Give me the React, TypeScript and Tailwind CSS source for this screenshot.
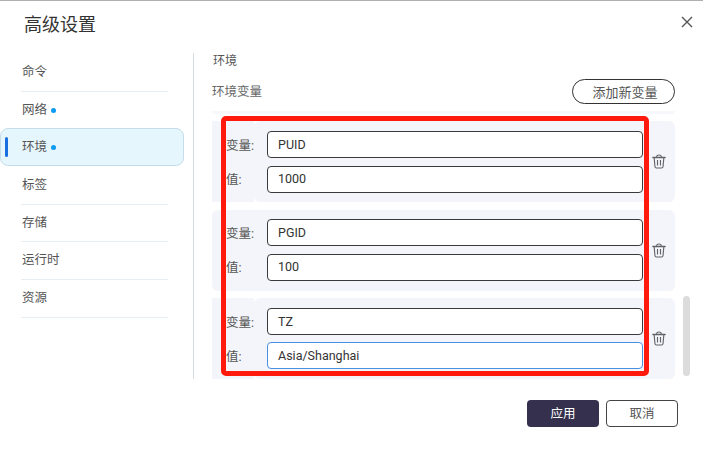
import React from 'react';

const navItems = [
  { label: '命令' },
  { label: '网络', dot: true },
  { label: '环境', dot: true, active: true },
  { label: '标签' },
  { label: '存储' },
  { label: '运行时' },
  { label: '资源' },
];

const envVars = [
  { name: 'PUID', value: '1000', padTop: 'pt-[10px]' },
  { name: 'PGID', value: '100', padTop: 'pt-[9.5px]', roundLeft: true },
  { name: 'TZ', value: 'Asia/Shanghai', padTop: 'pt-[9.9px]', focused: true },
];

function TrashIcon() {
  return (
    <svg width="14" height="15" viewBox="0 0 15 16" fill="none" stroke="#5f6368" strokeWidth="1.2">
      <path d="M1 3.6h13" strokeWidth="1.6" strokeLinecap="round" />
      <path d="M5 3.2c0-1.6 1-2.2 2.5-2.2s2.5.6 2.5 2.2" />
      <path d="M2.3 4l.9 9.6c.1.8.6 1.4 1.5 1.4h5.6c.9 0 1.4-.6 1.5-1.4l.9-9.6" />
      <path d="M5.9 6.5v5.8M9.1 6.5v5.8" />
    </svg>
  );
}

function EnvCard({ name, value, focused, padTop, roundLeft }: { name: string; value: string; focused?: boolean; padTop: string; roundLeft?: boolean }) {
  return (
    <div className="flex h-[81px] shrink-0">
      <div className={`flex w-[42px] flex-col gap-[7.5px] bg-[#f4f5fa] pl-[14px] text-[12.5px] text-[#555] ${padTop} ${roundLeft ? 'rounded-l-md' : ''}`}>
        <span className="flex h-[27px] items-center whitespace-nowrap pt-[3px]">变量:</span>
        <span className="flex h-[27px] items-center whitespace-nowrap pt-[3px]">值:</span>
      </div>
      <div className={`flex flex-1 bg-[#f4f5fa] pl-[13px] ${roundLeft ? 'rounded-r-md' : 'rounded-md'}`}>
        <div className={`flex w-[376px] flex-col gap-[7.5px] ${padTop}`}>
          <div className="flex h-[27px] items-center rounded-[4px] border border-[#3a3a3a] bg-white pl-[10px] pt-[1px] text-[12.5px] text-[#333]">
            {name}
          </div>
          <div className={`flex h-[27px] items-center rounded-[4px] border bg-white pl-[10px] pt-[1px] text-[12.5px] text-[#333] ${focused ? 'border-[#4a90e2]' : 'border-[#3a3a3a]'}`}>
            {value}
          </div>
        </div>
        <div className="flex flex-1 items-center justify-center">
          <TrashIcon />
        </div>
      </div>
    </div>
  );
}

export default function App() {
  return (
    <div
      className="flex h-[449px] w-[703px] flex-col overflow-hidden border-t border-[#b0b0b0] bg-white"
      style={{ fontFamily: 'Roboto, "Noto Sans CJK SC", sans-serif' }}
    >
      <div className="flex h-[52px] shrink-0 items-start justify-between pl-[24px] pr-[10px] pt-[10px]">
        <h1 className="text-[18px] leading-[27px] text-[#333]">高级设置</h1>
        <button className="mt-[5px] text-[#555]">
          <svg width="12" height="12" viewBox="0 0 12 12" stroke="currentColor" strokeWidth="1.4">
            <path d="M1 1l10 10M11 1L1 11" />
          </svg>
        </button>
      </div>

      <div className="flex h-[326px] shrink-0">
        <nav className="w-[194px] shrink-0 border-r border-[#d5dde3] pr-[9px] pt-[1px]">
          {navItems.map((item) =>
            item.active ? (
              <div
                key={item.label}
                className="relative -mt-[1px] mb-[1px] flex h-[37.67px] items-center rounded-lg border border-[#c6dce8] bg-[#e5f6fd] pl-[21px] text-[12.5px] text-[#555]"
              >
                <span className="absolute left-[4px] top-[8px] h-[20px] w-[3px] rounded-sm bg-[#1a6fe0]" />
                {item.label}
                <span className="ml-[4px] mt-[1px] h-[5px] w-[5px] rounded-full bg-[#0a9bf0]" />
              </div>
            ) : (
              <div key={item.label} className="pl-[21px] pr-[16px]">
                <div className={`flex h-[37.67px] items-center pl-[1px] text-[12.5px] text-[#555] ${item.label === '网络' ? '' : 'border-b border-[#e6eef4]'}`}>
                  {item.label}
                  {item.dot && <span className="ml-[4px] mt-[1px] h-[5px] w-[5px] rounded-full bg-[#0a9bf0]" />}
                </div>
              </div>
            ),
          )}
        </nav>

        <div className="relative flex-1 pl-[18px]">
          <div className="pl-[1px] pt-[1px] text-[12px] leading-[15px] text-[#555]">环境</div>
          <div className="mt-[10px] flex h-[25px] w-[463px] items-center justify-between">
            <span className="pt-[1px] text-[12.5px] text-[#666]">环境变量</span>
            <button className="flex h-[25px] w-[103px] items-center justify-center rounded-full border border-[#333] pl-[3px] pt-[2px] text-[13px] text-[#555]">
              添加新变量
            </button>
          </div>
          <div className="mt-[7px] h-[3px] w-[463px] rounded-b-md bg-[#f7f8fb]" />
          <div className="mt-[7px] flex w-[463px] flex-col gap-[7.5px]">
            {envVars.map((v) => (
              <EnvCard key={v.name} {...v} />
            ))}
          </div>

          {/* scrollbar thumb */}
          <div className="absolute left-[489px] top-[243px] h-[80px] w-[7px] rounded-full bg-[#dcdcdc]" />
          {/* red annotation drawn over the list */}
          <div className="pointer-events-none absolute left-[27px] top-[63px] h-[260px] w-[428px] rounded-[5px] border-[5px] border-[#ff1a0d]" />
        </div>
      </div>

      <div className="flex justify-end gap-[7px] pr-[25px] pt-[21px]">
        <button className="flex h-[27px] w-[72px] items-center justify-center rounded-[4px] bg-[#35304d] pt-[2px] text-[12.5px] text-white">
          应用
        </button>
        <button className="flex h-[27px] w-[72px] items-center justify-center rounded-[4px] border border-[#444] bg-white pt-[2px] text-[12.5px] text-[#555]">
          取消
        </button>
      </div>
    </div>
  );
}
